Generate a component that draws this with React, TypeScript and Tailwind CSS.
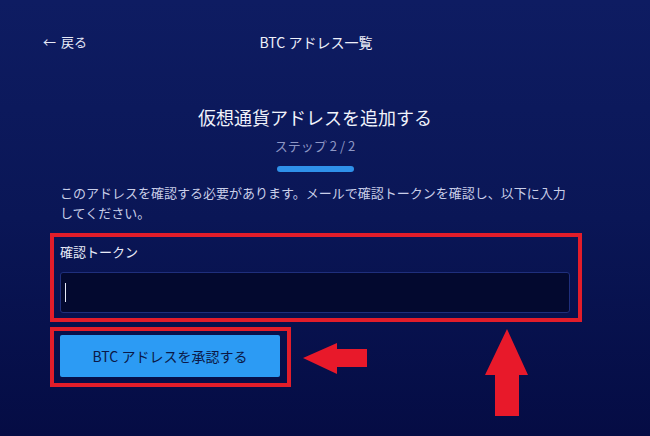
import React from "react";

export default function App() {
  return (
    <div
      className="relative w-[650px] h-[436px] overflow-hidden bg-[#0a1552]"
      style={{ fontFamily: '"Noto Sans CJK JP", "Noto Sans", sans-serif' }}
    >
      <div className="absolute inset-0 bg-gradient-to-b from-[#0e1c62] via-[#0a1656] to-[#050c44]" />
      <div className="relative flex flex-col">
        {/* header */}
        <div className="ml-[43px] mt-[32px] w-[546px] h-[20px] grid grid-cols-3 items-center">
          <div className="flex items-center gap-[5px] text-[13px] leading-[20px] text-[#e6e9f7] whitespace-nowrap">
            <span>←</span>
            <span>戻る</span>
          </div>
          <div className="text-center text-[14px] leading-[20px] text-[#eef0fa] whitespace-nowrap">BTC アドレス一覧</div>
          <div />
        </div>

        {/* main column */}
        <div className="ml-[60px] w-[510px] flex flex-col">
          <div className="mt-[52px] text-center text-[18px] leading-[26px] text-[#f1f3fb] whitespace-nowrap">
            仮想通貨アドレスを追加する
          </div>
          <div className="mt-[7px] text-center text-[13px] leading-[18px] text-[#8e97c4]">ステップ 2 / 2</div>
          <div className="mt-[11px] self-center w-[77px] h-[6px] rounded-full bg-[#2f91ea]" />
          <p className="mt-[11px] text-[13px] leading-[20px] text-[#c9cee8]">
            このアドレスを確認する必要があります。メールで確認トークンを確認し、以下に入力してください。
          </p>

          {/* token field (annotated) */}
          <div className="mt-[10px] -ml-[10px] w-[532px] border-4 border-[#e21d2a] pt-[6px] pb-[5px] px-[6px]">
            <div className="text-[13px] leading-[18px] font-normal text-[#e8ebf8]">確認トークン</div>
            <div className="mt-[11px] w-[510px] h-[41px] rounded-[3px] border border-[#1f2f7c] bg-[#03092f] flex items-center pl-[4px]">
              <div className="w-px h-[19px] bg-[#e6e9f7]" />
            </div>
          </div>

          {/* button (annotated) */}
          <div className="mt-[5px] -ml-[10px] w-[241px] border-4 border-[#e21d2a] pt-[4px] pl-[6px] pb-[6px]">
            <button className="w-[220px] h-[42px] rounded-[2px] bg-[#2c9bf4] text-[14px] text-[#0b1846] flex items-center justify-center">
              BTC アドレスを承認する
            </button>
          </div>
        </div>
      </div>

      {/* annotation arrows */}
      <svg className="absolute left-0 top-0" width="650" height="436" viewBox="0 0 650 436">
        <polygon points="303,358 337,343 337,349 367,349 367,367 337,367 337,374" fill="#e8192a" />
        <polygon points="507,329 528,375 519,375 519,416 495,416 495,375 485,375" fill="#e8192a" />
      </svg>
    </div>
  );
}
